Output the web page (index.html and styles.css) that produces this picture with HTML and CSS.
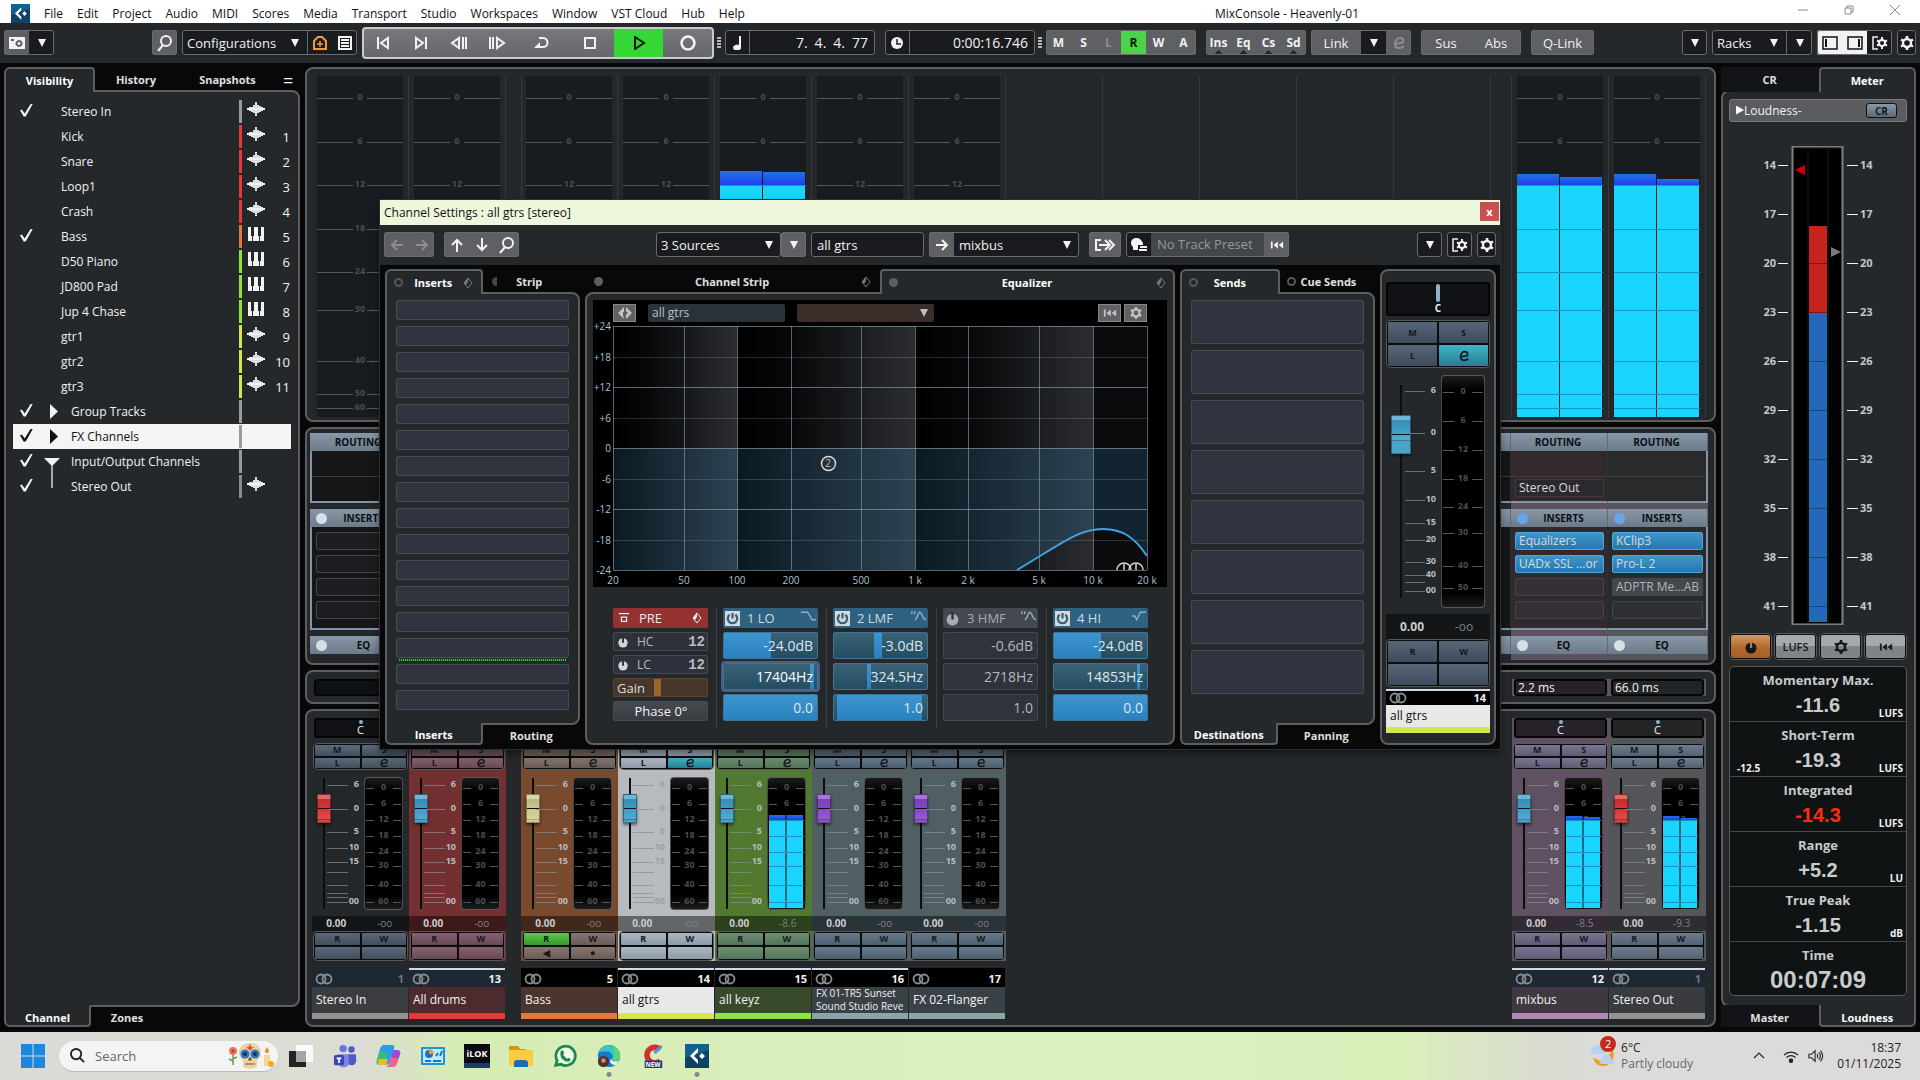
FILE: index.html
```html
<!DOCTYPE html>
<html lang="en">
<head>
  <meta charset="UTF-8" />
  <meta name="viewport" content="width=device-width, initial-scale=1.0"/>
  <title>MixConsole - Heavenly-01</title>
  <link rel="stylesheet" href="styles.css">
</head>
<body>
  <svg class="sprite" aria-hidden="true">
    <symbol id="i-down" viewBox="0 0 10 10"><path d="M1 1h8L5 9z" fill="currentColor"/></symbol>
    <symbol id="i-search" viewBox="0 0 18 18"><g fill="none" stroke="currentColor" stroke-width="2"><circle cx="10" cy="7" r="5"/><path d="M7 11l-5 6"/></g></symbol>
    <symbol id="i-camera" viewBox="0 0 18 14"><path fill="currentColor" fill-rule="evenodd" d="M1 1h16v12H1zM3 3v2h3V3zM11 4a3.500 3.500 0 1 0 .1 0zM11 6a1.500 1.500 0 1 1-.1 0z"/></symbol>
    <symbol id="i-home" viewBox="0 0 14 14"><path fill="none" stroke="currentColor" stroke-width="2" d="M1 13V5l4-4h4l4 4v8z"/><path stroke="currentColor" stroke-width="1.500" d="M4 8h6M7 5v6"/></symbol>
    <symbol id="i-list" viewBox="0 0 14 14"><path fill="none" stroke="currentColor" stroke-width="2" d="M1 1h12v12H1zM3 4h8M3 7h8M3 10h8"/></symbol>
    <symbol id="i-prev" viewBox="0 0 14 14"><path fill="none" stroke="currentColor" stroke-width="2" d="M2 1v12M12 2v10L5 7z"/></symbol>
    <symbol id="i-next" viewBox="0 0 14 14"><path fill="none" stroke="currentColor" stroke-width="2" d="M12 1v12M2 2v10l7-5z"/></symbol>
    <symbol id="i-rew" viewBox="0 0 18 14"><path fill="none" stroke="currentColor" stroke-width="2" d="M9 2v10L2 7zM13 1v12M16 1v12"/></symbol>
    <symbol id="i-fwd" viewBox="0 0 18 14"><path fill="none" stroke="currentColor" stroke-width="2" d="M9 2v10l7-5zM5 1v12M2 1v12"/></symbol>
    <symbol id="i-cycle" viewBox="0 0 16 14"><path fill="none" stroke="currentColor" stroke-width="2" d="M6 2h4a4 4 0 0 1 0 9H4"/><path fill="currentColor" d="M1 12l6-6v6z"/></symbol>
    <symbol id="i-stop" viewBox="0 0 14 14"><path fill="none" stroke="currentColor" stroke-width="2" d="M2 2h10v10H2z"/></symbol>
    <symbol id="i-play" viewBox="0 0 14 14"><path fill="none" stroke="currentColor" stroke-width="2" d="M3 1v12l9-6z"/></symbol>
    <symbol id="i-rec" viewBox="0 0 14 14"><circle cx="7" cy="7" r="5" fill="none" stroke="currentColor" stroke-width="2"/></symbol>
    <symbol id="i-note" viewBox="0 0 10 14"><path fill="currentColor" d="M7 0h2v11a4 3 0 1 1-2-2z"/></symbol>
    <symbol id="i-clock" viewBox="0 0 14 14"><circle cx="7" cy="7" r="6" fill="currentColor"/><path d="M7 3v5h4" fill="none" stroke="#1a1b1f" stroke-width="1.500"/></symbol>
    <symbol id="i-edit" viewBox="0 0 14 14"><path fill="none" stroke="currentColor" stroke-width="2" d="M3 8l8-1.500C12 3 10 2 8 2 5 2 3 5 3 8s1 4 4 4 4-1 5-2"/></symbol>
    <symbol id="i-gear" viewBox="0 0 14 14"><circle cx="7" cy="7" r="4" fill="none" stroke="currentColor" stroke-width="2.400"/><path stroke="currentColor" stroke-width="2.600" d="M7 0v3M7 11v3M1 3.500l2.500 1.500M10.500 9l2.500 1.500M1 10.500L3.500 9M10.500 5L13 3.500"/></symbol>
    <symbol id="i-setup" viewBox="0 0 16 14"><path fill="none" stroke="currentColor" stroke-width="1.500" d="M6 1H1v12h5"/><circle cx="10" cy="7" r="3" fill="none" stroke="currentColor" stroke-width="2"/><path stroke="currentColor" stroke-width="2" d="M10 1v3M10 10v3M5 4.500l2 1M13 8.500l2 1M5 9.500l2-1M13 5.500l2-1"/></symbol>
    <symbol id="i-zone-l" viewBox="0 0 16 14"><path fill="none" stroke="currentColor" stroke-width="1.500" d="M1 1h14v12H1z"/><path stroke="currentColor" stroke-width="2" d="M4 3v8"/></symbol>
    <symbol id="i-zone-r" viewBox="0 0 16 14"><path fill="none" stroke="currentColor" stroke-width="1.500" d="M1 1h14v12H1z"/><path stroke="currentColor" stroke-width="2" d="M12 3v8"/></symbol>
    <symbol id="i-left" viewBox="0 0 14 14"><path fill="none" stroke="currentColor" stroke-width="2" d="M13 7H2M7 2L2 7l5 5"/></symbol>
    <symbol id="i-right" viewBox="0 0 14 14"><path fill="none" stroke="currentColor" stroke-width="2" d="M1 7h11M7 2l5 5-5 5"/></symbol>
    <symbol id="i-up" viewBox="0 0 14 14"><path fill="none" stroke="currentColor" stroke-width="2" d="M7 14V2M2 7l5-5 5 5"/></symbol>
    <symbol id="i-dn" viewBox="0 0 14 14"><path fill="none" stroke="currentColor" stroke-width="2" d="M7 0v12M2 7l5 5 5-5"/></symbol>
    <symbol id="i-output" viewBox="0 0 22 14"><path fill="none" stroke="currentColor" stroke-width="2" d="M7 2H2v10h5M5 7h10M11 2l5 5-5 5M15 2l5 5-5 5"/></symbol>
    <symbol id="i-preset" viewBox="0 0 18 14"><path fill="currentColor" d="M7 0C3 0 1 2 1 5c0 2 1 3 2 4v3h5V7h5V5l-2-3C10 1 9 0 7 0zM10 8h7v2h-7zM9 11h8v2H9z"/></symbol>
    <symbol id="i-reset" viewBox="0 0 16 10"><path fill="currentColor" d="M1 1h2v8H1zM9 1v8L4 5zM15 1v8l-5-4z"/></symbol>
    <symbol id="i-diamond" viewBox="0 0 10 12"><path fill="none" stroke="currentColor" d="M5 1l4 5-4 5-4-5z"/><path fill="currentColor" d="M5 1v4L3 8 1 6z"/></symbol>
    <symbol id="i-compare" viewBox="0 0 14 12"><path fill="currentColor" d="M6 0v5H5v3l1 4L0 6zM8 0l6 6-6 6V8l2-2-2-2z"/></symbol>
    <symbol id="i-power" viewBox="0 0 14 14"><circle cx="7" cy="8" r="5.500" fill="currentColor"/><path d="M7 1v7" stroke="#2b2f38" stroke-width="2.200"/></symbol>
    <symbol id="i-measure" viewBox="0 0 14 14"><circle cx="7" cy="8" r="5.500" fill="currentColor"/><path d="M7 1v7" stroke="#b87a42" stroke-width="2.200"/></symbol>
    <symbol id="i-power-on" viewBox="0 0 16 16"><path fill="#d6d8da" d="M0 0h16v16H0z"/><path d="M5 4a5 5 0 1 0 6 0M8 2v6" fill="none" stroke="#2f6380" stroke-width="2.400"/></symbol>
    <symbol id="i-low" viewBox="0 0 16 10"><path fill="none" stroke="currentColor" stroke-width="1.500" d="M0 1h7l5 8h4"/></symbol>
    <symbol id="i-bell" viewBox="0 0 16 10"><path fill="none" stroke="currentColor" stroke-width="1.500" d="M1 0v3M4 0v3M4 9c3 0 3-8 5.500-8S12 9 16 9"/></symbol>
    <symbol id="i-high" viewBox="0 0 16 10"><path fill="none" stroke="currentColor" stroke-width="1.500" d="M1 5h3l2 4 4-8h6"/></symbol>
    <symbol id="i-wave" viewBox="0 0 18 14"><path stroke="currentColor" stroke-width="1.800" d="M0 7h18M3 5v4M5 5v5M7 3v8M9 0v14M11 3v8M13 4v6M15 5v4"/></symbol>
    <symbol id="i-keys" viewBox="0 0 16 14"><path fill="currentColor" d="M0 0h3v9h1v5H0zM6 0h4v9h1v5H5V9h1zM13 0h3v14h-4V9h1z"/></symbol>
    <symbol id="i-rings" viewBox="0 0 18 12"><g fill="none" stroke="currentColor" stroke-width="1.800"><circle cx="6" cy="6" r="4.500"/><circle cx="12" cy="6" r="4.500"/></g></symbol>
    <symbol id="i-cubase" viewBox="0 0 24 24"><path fill="#14608c" d="M0 0h24v24H0z"/><path fill="#0d4166" d="M0 14l24-8v18H0z"/><path fill="#fff" d="M13 4v4l-4 4 4 4v4l-8-8zM17 9l3 3-3 3-3-3z"/></symbol>
  </svg>

  <header class="menubar">
    <svg class="logo"><use href="#i-cubase"/></svg>
    <nav>
      <a href="#">File</a><a href="#">Edit</a><a href="#">Project</a><a href="#">Audio</a><a href="#">MIDI</a><a href="#">Scores</a><a href="#">Media</a><a href="#">Transport</a><a href="#">Studio</a><a href="#">Workspaces</a><a href="#">Window</a><a href="#">VST Cloud</a><a href="#">Hub</a><a href="#">Help</a>
    </nav>
    <h1>MixConsole - Heavenly-01</h1>
    <div class="window-controls">
      <button aria-label="Minimize"><svg viewBox="0 0 10 10"><path d="M0 5h10"/></svg></button>
      <button aria-label="Restore"><svg viewBox="0 0 10 10"><path d="M1 3h6v6H1zM3 3V1h6v6H7"/></svg></button>
      <button aria-label="Close"><svg viewBox="0 0 10 10"><path d="M0 0l10 10M10 0L0 10"/></svg></button>
    </div>
  </header>

  <div class="toolbar">
    <div class="group">
      <button class="lit" aria-label="Snapshot"><svg class="wide"><use href="#i-camera"/></svg></button>
      <button aria-label="Snapshots menu"><svg class="caret"><use href="#i-down"/></svg></button>
    </div>
    <div class="group find"><button class="lit" aria-label="Find"><svg class="big"><use href="#i-search"/></svg></button></div>
    <div class="group">
      <label class="combo combo-config"><select aria-label="Configurations"><option>Configurations</option></select><svg class="caret"><use href="#i-down"/></svg></label>
      <button class="orange" aria-label="Home"><svg><use href="#i-home"/></svg></button>
      <button aria-label="List"><svg><use href="#i-list"/></svg></button>
    </div>
    <div class="transport">
      <button aria-label="Previous"><svg><use href="#i-prev"/></svg></button>
      <button aria-label="Next"><svg><use href="#i-next"/></svg></button>
      <button aria-label="Rewind"><svg class="wide"><use href="#i-rew"/></svg></button>
      <button aria-label="Forward"><svg class="wide"><use href="#i-fwd"/></svg></button>
      <button class="w50" aria-label="Cycle"><svg class="wide"><use href="#i-cycle"/></svg></button>
      <button class="w50" aria-label="Stop"><svg><use href="#i-stop"/></svg></button>
      <button class="w50 play" aria-label="Play"><svg><use href="#i-play"/></svg></button>
      <button class="w50" aria-label="Record"><svg class="big"><use href="#i-rec"/></svg></button>
    </div>
    <i class="grip"></i>
    <div class="group time"><button aria-label="Bars and beats"><svg><use href="#i-note"/></svg></button><output>7.&ensp;4.&ensp;4.&ensp;77</output></div>
    <div class="group time second"><button aria-label="Seconds"><svg><use href="#i-clock"/></svg></button><output>0:00:16.746</output></div>
    <i class="grip"></i>
    <div class="group lit letters">
      <button>M</button><button>S</button><button class="off">L</button><button class="on">R</button><button>W</button><button>A</button>
    </div>
    <div class="group lit letters tight notched">
      <button>Ins</button><button>Eq</button><button>Cs</button><button>Sd</button>
    </div>
    <div class="group lit words link">
      <button>Link</button><button class="dark" aria-label="Link options"><svg class="caret"><use href="#i-down"/></svg></button><button class="off" aria-label="Edit link"><svg><use href="#i-edit"/></svg></button>
    </div>
    <div class="group lit words sus"><button>Sus</button><button>Abs</button></div>
    <div class="group lit words qlink"><button>Q-Link</button></div>
    <div class="group push"><button aria-label="Bypass"><svg class="caret"><use href="#i-down"/></svg></button></div>
    <div class="group">
      <label class="combo combo-racks"><select aria-label="Racks"><option>Racks</option></select><svg class="caret"><use href="#i-down"/></svg></label>
      <button aria-label="Rack menu"><svg class="caret"><use href="#i-down"/></svg></button>
    </div>
    <div class="group">
      <button class="white" aria-label="Left zone"><svg class="wide"><use href="#i-zone-l"/></svg></button>
      <button class="white" aria-label="Right zone"><svg class="wide"><use href="#i-zone-r"/></svg></button>
      <button aria-label="Window setup"><svg class="wide"><use href="#i-setup"/></svg></button>
    </div>
    <div class="group slim"><button aria-label="Settings"><svg><use href="#i-gear"/></svg></button></div>
  </div>

  <main>
    <aside class="panel left-zone">
      <div class="tabs">
        <button class="tab active">Visibility</button><button class="tab">History</button><button class="tab">Snapshots</button><span class="menu-mark">=</span>
      </div>
      <div class="pane"><ul id="trackList"></ul></div>
      <div class="tabs bottom"><button class="tab active">Channel</button><button class="tab">Zones</button></div>
    </aside>

    <div class="mixer">
      <section class="box bridge" id="bridge"></section>
      <section class="box racks" id="racks"></section>
      <section class="box latency" id="latency"></section>
      <section class="box strips" id="strips"></section>
    </div>

    <aside class="panel right-zone">
      <div class="tabs"><button class="tab">CR</button><button class="tab active">Meter</button></div>
      <div class="pane">
        <div class="loudness-head"><span><i class="tri"></i>Loudness-</span><button>CR</button></div>
        <div id="loudnessMeter"></div>
        <div class="loudness-buttons">
          <button class="amber" aria-label="Measure"><svg><use href="#i-measure"/></svg></button><button>LUFS</button><button aria-label="Loudness settings"><svg><use href="#i-gear"/></svg></button><button aria-label="Reset loudness"><svg><use href="#i-reset"/></svg></button>
        </div>
        <dl class="stats" id="stats"></dl>
      </div>
      <div class="tabs bottom"><button class="tab">Master</button><button class="tab active">Loudness</button></div>
    </aside>
  </main>

  <section class="dialog">
    <div class="dialog-title"><h2>Channel Settings : all gtrs [stereo]</h2><button aria-label="Close channel settings">x</button></div>
    <div class="toolbar dialog-tools">
      <div class="group lit dim"><button aria-label="Back"><svg><use href="#i-left"/></svg></button><button aria-label="Forward"><svg><use href="#i-right"/></svg></button></div>
      <div class="group lit"><button aria-label="Up"><svg><use href="#i-up"/></svg></button><button aria-label="Down"><svg><use href="#i-dn"/></svg></button><button aria-label="Search"><svg class="big"><use href="#i-search"/></svg></button></div>
      <div class="group sources"><label class="combo combo-config"><select aria-label="Sources"><option>3 Sources</option></select><svg class="caret"><use href="#i-down"/></svg></label></div>
      <div class="group lit"><button aria-label="Sources menu"><svg class="caret"><use href="#i-down"/></svg></button></div>
      <div class="group name"><input aria-label="Channel name" value="all gtrs"></div>
      <div class="group"><button class="lit" aria-label="Route"><svg><use href="#i-right"/></svg></button><label class="combo combo-config"><select aria-label="Output"><option>mixbus</option></select><svg class="caret"><use href="#i-down"/></svg></label></div>
      <div class="group lit out"><button aria-label="Output chain"><svg class="chain"><use href="#i-output"/></svg></button></div>
      <div class="group"><button aria-label="Presets"><svg class="wide"><use href="#i-preset"/></svg></button><span class="preset">No Track Preset</span><button class="lit" aria-label="Reset channel"><svg><use href="#i-reset"/></svg></button></div>
      <div class="group push"><button aria-label="Dialog menu"><svg class="caret"><use href="#i-down"/></svg></button></div>
      <div class="group"><button aria-label="Dialog setup"><svg class="wide"><use href="#i-setup"/></svg></button></div>
      <div class="group slim"><button aria-label="Dialog settings"><svg><use href="#i-gear"/></svg></button></div>
    </div>
    <div class="dialog-body">
      <div class="panel inserts">
        <div class="tabs"><button class="tab active"><i class="ring"></i>Inserts<svg class="dia"><use href="#i-diamond"/></svg></button><button class="tab"><i class="half"></i>Strip<i class="blank"></i></button></div>
        <div class="pane" id="insertSlots"></div>
        <div class="tabs bottom"><button class="tab active">Inserts</button><button class="tab">Routing</button></div>
      </div>
      <div class="panel equalizer">
        <div class="tabs"><button class="tab"><i class="dot"></i>Channel Strip<svg class="dia"><use href="#i-diamond"/></svg></button><button class="tab active"><i class="dot"></i>Equalizer<svg class="dia"><use href="#i-diamond"/></svg></button></div>
        <div class="pane">
          <div class="curve">
            <div class="curve-tools">
              <button aria-label="Compare"><svg><use href="#i-compare"/></svg></button>
              <input aria-label="EQ channel" value="all gtrs">
              <label class="combo"><select aria-label="EQ compare source"><option></option></select><svg class="caret"><use href="#i-down"/></svg></label>
              <button class="push" aria-label="Reset EQ"><svg><use href="#i-reset"/></svg></button>
              <button aria-label="EQ settings"><svg><use href="#i-gear"/></svg></button>
            </div>
            <div id="curve"></div>
          </div>
          <div class="bands" id="bands"></div>
        </div>
      </div>
      <div class="panel sends">
        <div class="tabs"><button class="tab active"><i class="ring"></i>Sends<i class="blank"></i></button><button class="tab"><i class="ring"></i>Cue Sends</button></div>
        <div class="pane" id="sendSlots"></div>
        <div class="tabs bottom"><button class="tab active">Destinations</button><button class="tab">Panning</button></div>
      </div>
      <div class="box dialog-strip" id="dialogStrip"></div>
    </div>
  </section>

  <footer class="taskbar">
    <button aria-label="Start"><svg viewBox="0 0 24 24"><path fill="#1b87dd" d="M0 0h11.500v11.500H0zM12.500 0H24v11.500H12.500zM0 12.500h11.500V24H0zM12.500 12.500H24V24H12.500z"/></svg></button>
    <label class="search">
      <svg class="glass" viewBox="0 0 16 16"><path fill="none" stroke="#222" stroke-width="2" d="M10.500 10.500L15 15M12 6.500a5.500 5.500 0 1 1-11 0 5.500 5.500 0 0 1 11 0z"/></svg>
      <input type="search" placeholder="Search" aria-label="Search">
      <svg class="skull" viewBox="0 0 46 26"><path stroke="#6a9a4a" stroke-width="1.500" d="M5 10v12M5 16l4-2M5 18l-4-2"/><circle cx="5" cy="8" r="4" fill="#e8745c"/><circle cx="5" cy="8" r="1.500" fill="#b43c32"/><path fill="#ecd3a2" d="M22 0c7 0 11 4 11 10 0 5-3 6-4 8v6c-3 2-11 2-14 0v-6c-1-2-4-3-4-8C11 4 15 0 22 0z"/><circle cx="17" cy="11" r="4.500" fill="#2877c8"/><circle cx="27" cy="11" r="4.500" fill="#2877c8"/><circle cx="17" cy="11" r="2" fill="#173250"/><circle cx="27" cy="11" r="2" fill="#173250"/><path fill="#e2503c" d="M22 1l1.500 3 3 .5-3 1.500L22 8l-1.500-2-3-1.500 3-.5z"/><path d="M22 14l-1.500 3h3zM17 21h10" stroke="#7c4c2e" fill="#7c4c2e"/><path fill="#f4d890" d="M36 12h6v11h-6z"/><path fill="#ec8b28" d="M39 4c3 4 2 6 0 6s-3-2 0-6z"/><circle cx="43" cy="21" r="3" fill="#f6a728"/></svg>
    </label>
    <button aria-label="Task view"><svg viewBox="0 0 26 24"><path fill="#fafafa" d="M8 1h17v17H8z"/><path fill="#232323" d="M1 7h17v16H1z"/><path fill="#a5a5a5" d="M8 7h10v11H8z"/></svg></button>
    <button aria-label="Teams"><svg viewBox="0 0 26 26"><circle cx="11" cy="5" r="4" fill="#6b74e8"/><circle cx="20" cy="6" r="3.500" fill="#5059c9"/><path fill="#7b83eb" d="M5 11h13v8a6.500 6.500 0 0 1-13 0z"/><path fill="#5059c9" d="M17 11h8v8a5 5 0 0 1-8 3z"/><rect x="1" y="12" width="11" height="11" rx="2" fill="#3d45b0"/><path stroke="#fff" stroke-width="1.800" d="M4 15.500h5M6.500 15.500v5"/></svg></button>
    <button aria-label="Copilot"><svg viewBox="0 0 26 24"><path fill="#2d9cf0" d="M8 1h8c2 0 3 2 2 4l-4 12c-1 3-3 4-5 4H4c-3 0-4-2-3-5L4 5c1-3 2-4 4-4z"/><path fill="#36c06e" d="M1 16l3-9 8 3-3 10H4c-3 0-4-1-3-4z"/><path fill="#f0b72e" d="M3 15h9l-2 6H4c-2 0-3-2-1-6z"/><path fill="#a24bd8" d="M17 6h4c3 0 4 2 3 5l-3 8c-1 3-3 4-5 4h-3z"/><path fill="#f0668a" d="M14 14h8l-1 5c-1 3-3 4-5 4H9c2 0 3-1 4-4z"/></svg></button>
    <button aria-label="Control panel"><svg viewBox="0 0 26 24"><rect x="1" y="3" width="24" height="18" rx="1" fill="#1d94d8"/><path fill="#bfeaff" d="M3 5h20v14H3z"/><circle cx="9" cy="10" r="4" fill="#1774c0"/><path fill="#f0982c" d="M9 10V5a5 5 0 0 1 5 5z"/><path stroke="#1774c0" stroke-width="2" d="M16 12l2-3M20 12l2-5M5 17h6M13 17h8"/></svg></button>
    <button class="ilok" aria-label="iLok"><span>iLOK</span></button>
    <button aria-label="Explorer"><svg viewBox="0 0 26 24"><path fill="#d89410" d="M1 2h9l2 3h6v5H1z"/><path fill="#fccb41" d="M1 6h24v16H1z"/><path fill="#1b6db3" d="M6 23v-5a3 3 0 0 1 3-2h8a3 3 0 0 1 3 2v5z"/></svg></button>
    <button aria-label="WhatsApp"><svg viewBox="0 0 26 26"><path fill="#f2fbe8" stroke="#1c8a4c" stroke-width="3" d="M3 23l1.500-5A10.500 10.500 0 1 1 8.500 22z"/><path fill="#1c8a4c" d="M9 7l2 0 1 3-1 2 4 4 2-1 2 1.500c0 2-2 3-4 2.500-4-1-7-4-7-8 0-2 0-3 1-4z"/></svg></button>
    <button class="running" aria-label="Edge"><svg viewBox="0 0 26 26"><circle cx="13" cy="13" r="12" fill="#1878c8"/><path fill="#37c8c4" d="M2 9C5 1 15-1 21 4c4 3 5 9 3 12-2 2-7 3-8 0 2-3 0-8-5-8-4 0-7 0-9 1z"/><path fill="#5fd86e" d="M18 2c6 3 8 9 6 14-1 2-5 3-7 1 3-4 3-10 1-15z"/><path fill="#eef6dd" d="M15 16c2 4 7 3 9 1-1 3-3 5-5 6-4-1-6-4-4-7z"/><circle cx="7" cy="19" r="6" fill="#4a302c"/><circle cx="7" cy="18" r="2.500" fill="#c98d72"/></svg></button>
    <button aria-label="CCleaner"><svg viewBox="0 0 26 26"><path fill="none" stroke="#d92c2c" stroke-width="6" d="M21 6a8.500 8.500 0 1 0 0 12"/><path fill="#4d9be0" d="M13 8l9-7 1 2-7 8z"/><rect x="4" y="18" width="19" height="8" fill="#1c3b78"/><text x="13" y="25" fill="#fff" font-size="7" font-weight="700" text-anchor="middle">NEW</text></svg></button>
    <button class="running" aria-label="Cubase"><svg><use href="#i-cubase"/></svg></button>
    <div class="weather">
      <div class="weather-icon"><svg viewBox="0 0 26 26"><path fill="#f09a28" d="M4 15c4 4 9 4 14 0 4-4 5-6 5-9 4 8 1 18-9 18-6 0-9-4-10-9z"/><path fill="#b8d2f4" d="M3 12a4 4 0 0 1 2-7 5 5 0 0 1 9 1 3 3 0 0 1 0 6zM13 22a3 3 0 0 1 1-6 4 4 0 0 1 8 1 2.500 2.500 0 0 1 1 5z"/></svg><b>2</b></div>
      <p>6°C<br><span>Partly cloudy</span></p>
    </div>
    <div class="tray">
      <svg viewBox="0 0 16 16"><path d="M3 10l5-5 5 5"/></svg>
      <svg viewBox="0 0 16 16"><path d="M1 7a10 10 0 0 1 14 0M3.500 9.500a6.500 6.500 0 0 1 9 0M6 12a3 3 0 0 1 4 0"/><circle cx="8" cy="13" r="1.500" fill="#222"/></svg>
      <svg viewBox="0 0 18 16"><path d="M1 6h3l4-4v12l-4-4H1zM10 6q2 2 0 4M12 4q4 4 0 8M14 2q5 6 0 12"/></svg>
    </div>
    <time>18:37<br>01/11/2025</time>
  </footer>

  <script src="script.js"></script>
</body>
</html>
```
FILE: styles.css
```css
* {
  box-sizing: border-box;
}

body {
  --edge: #5d5e61;
  --face: #24282b;
  display: flex;
  flex-direction: column;
  height: 100vh;
  margin: 0;
  overflow: hidden;
  background: #080808;
  color: #f2f2f2;
  font: 12px/16px "Open Sans", "Noto Sans", sans-serif;
}

button, input, select {
  margin: 0;
  padding: 0;
  border: 0;
  border-radius: 0;
  background: none;
  color: inherit;
  font: inherit;
  outline: none;
}

h1, h2, p, ul, dl, dd {
  margin: 0;
  padding: 0;
}

svg {
  display: block;
  flex: none;
}

.sprite {
  position: absolute;
  width: 0;
  height: 0;
}

/* menu bar */
.menubar {
  display: grid;
  grid-template-columns: 33px 1171px 1fr auto;
  align-items: center;
  height: 23px;
  padding: 4px 20px 0 11px;
  background: #fff;
  color: #111;
}

.menubar .logo {
  width: 19px;
  height: 19px;
}

.menubar nav {
  display: flex;
  gap: 14px;
}

.menubar a {
  color: inherit;
  text-decoration: none;
}

.menubar nav, .menubar h1 {
  font-size: 12px;
  font-weight: 400;
}

.window-controls {
  display: flex;
  gap: 36px;
  padding-bottom: 8px;
}

.window-controls svg {
  width: 10px;
  height: 10px;
  fill: none;
  stroke: #888;
}

/* toolbars */
.toolbar {
  display: flex;
  align-items: center;
  gap: 5px;
  height: 40px;
  padding: 0 4px 1px;
  background: var(--face);
}

.group {
  display: flex;
  height: 25px;
  overflow: hidden;
  outline: 1px solid #6a6b6e;
  outline-offset: -1px;
  border-radius: 3px;
  background: #1a1b1f;
}

.group button {
  display: flex;
  flex: 0 0 25px;
  align-items: center;
  justify-content: center;
}

.group.time button {
  border-right: 1px solid #6a6b6e;
}

.toolbar svg {
  width: 14px;
  height: 14px;
}

.toolbar svg.caret {
  width: 10px;
  height: 10px;
}

.toolbar svg.wide {
  width: 18px;
}

.toolbar svg.chain {
  width: 22px;
}

.toolbar svg.big {
  width: 18px;
  height: 18px;
}

.group.lit, .lit {
  background: #5f6063;
}

.group .white {
  background: #f2f2f2;
  color: #111;
}

.group .dark {
  background: #1a1b1f;
}

.group .orange {
  border-left: 1px solid #6a6b6e;
  color: #f09a3c;
}

.dim, .group .off {
  color: #8c8d90;
}

.group .on {
  background: #4bd44b;
  color: #0c1c0c;
}

.find {
  margin-left: 93px;
}

.combo {
  display: flex;
  align-items: center;
  padding: 0 7px 0 5px;
}

.combo select {
  flex: 1;
  min-width: 0;
  appearance: none;
  font-size: 13px;
}

.combo-config {
  width: 125px;
}

.combo-racks {
  width: 75px;
  border-right: 1px solid #6a6b6e;
}

.transport {
  display: flex;
  height: 32px;
  border: 2px solid #c9cacd;
  border-radius: 4px;
  background: linear-gradient(#77787b, #66676a);
}

.transport button {
  display: flex;
  flex: 0 0 38px;
  align-items: center;
  justify-content: center;
}

.transport .w50 {
  flex-basis: 49px;
}

.transport .play {
  background: #36d636;
  color: #0c1c0c;
}

.grip {
  width: 4px;
  height: 12px;
  margin: 0 -1px 0 -2px;
  background: repeating-linear-gradient(#b8b8b8 0 2px, transparent 2px 3px);
}

.time {
  width: 150px;
}

.time.second {
  margin-left: 5px;
}

.time output {
  flex: 1;
  padding-right: 7px;
  font-size: 14px;
  line-height: 25px;
  text-align: right;
}

.letters {
  font-size: 12px;
  font-weight: 700;
}

.letters.tight {
  margin-left: 5px;
}

.notched button {
  background: conic-gradient(from 135deg at 50% 20px, #24282b 90deg, transparent 0);
}

.words {
  font-size: 13px;
}

.link button:first-child, .sus button {
  flex-basis: 50px;
}

.sus, .qlink {
  margin-left: 5px;
}

.qlink button {
  flex-basis: 63px;
}

.toolbar .push {
  margin-left: auto;
}

.slim button {
  flex-basis: 19px;
}

/* tabbed panels */
.panel {
  display: flex;
  flex-direction: column;
}

.tabs {
  display: flex;
  flex: none;
  position: relative;
  height: 25px;
  margin-bottom: -2px;
}

.tabs.bottom {
  height: 22px;
  margin: -2px 0 0;
}

.tab {
  flex: 1;
  border: 2px solid transparent;
  font-weight: 700;
  font-size: 11px;
  color: #e0e0e0;
}

.tab.active {
  border-color: var(--edge);
  border-bottom: 0;
  border-radius: 6px 4px 0 0;
  background: var(--face);
  color: #fff;
}

.bottom .tab {
  padding-top: 3px;
}

.bottom .tab.active {
  padding-top: 5px;
  border: 2px solid var(--edge);
  border-top: 0;
  border-radius: 0 0 4px 6px;
}

.pane {
  flex: 1;
  min-height: 0;
  border: 2px solid var(--edge);
  border-radius: 0 8px 8px 0;
  background: var(--face);
}

.box {
  border: 2px solid var(--edge);
  border-radius: 8px;
  background: var(--face);
}

main {
  display: flex;
  flex: 1;
  gap: 5px;
  min-height: 0;
  padding: 4px 4px 5px;
}

/* visibility list */
.left-zone {
  flex: 0 0 296px;
}

.left-zone .tab {
  flex: 0 0 91px;
}

.left-zone .tab + .tab {
  flex-basis: 82px;
}

.left-zone .tab + .tab + .tab {
  flex-basis: 101px;
}

.left-zone .bottom .tab {
  flex-basis: 87px;
}

.left-zone .bottom .tab + .tab {
  flex-basis: 72px;
}

.menu-mark {
  margin-left: 5px;
  font-size: 18px;
  line-height: 26px;
}

.left-zone .pane {
  padding: 7px 7px 6px;
}

.left-zone ul {
  list-style: none;
}

.left-zone li {
  display: grid;
  grid-template: 25px / 32px 16px 178px 3px 24px 1fr;
  align-items: center;
  height: 25px;
  font-size: 12px;
}

.left-zone li input {
  width: 13px;
  height: 13px;
  margin: 0 0 3px 7px;
  appearance: none;
}

.left-zone li input:checked {
  background: currentColor;
  clip-path: polygon(0 52%, 14% 46%, 36% 76%, 84% 0, 100% 0, 44% 100%, 28% 100%);
}

.left-zone li label {
  display: contents;
}

.left-zone li.folder label span {
  padding-left: 10px;
}

.left-zone li.selected {
  background: #f4f4f4;
  color: #111;
}

.left-zone li .bar {
  height: 23px;
  background: var(--color);
}

.left-zone li svg {
  width: 18px;
  height: 14px;
  margin: 0 0 6px 5px;
}

.left-zone li b {
  padding-right: 1px;
  font-size: 13px;
  font-weight: 400;
  text-align: right;
}

.fold {
  width: 8px;
  height: 15px;
  margin-left: 5px;
  background: currentColor;
  clip-path: polygon(0 0, 100% 50%, 0 100%);
}

.fold.open {
  align-self: start;
  width: 16px;
  height: 39px;
  margin-left: -1px;
  clip-path: polygon(0 23%, 100% 23%, 54% 42%, 54% 100%, 46% 100%, 46% 42%);
}

/* mixer */
.mixer {
  display: flex;
  flex: 1;
  flex-direction: column;
  gap: 5px;
  min-width: 0;
}

.mixer > .box {
  display: flex;
  padding: 7px 8px 6px 5px;
}

.cell {
  flex: 0 0 97px;
}

.cell.gap-after {
  margin-right: 15px;
}

.filler {
  flex: 1;
}

.mixer > .bridge {
  flex: 1;
  padding-bottom: 2px;
}

.bridge .cell {
  display: flex;
  justify-content: center;
  border-right: 1px solid #36393c;
}

.well {
  height: 341px;
  background: #181b1f;
}

.bridge .cell.gap-after {
  box-shadow: 15px 0 0 0 #24282b, 16px 0 0 #36393c;
}

.bridge .filler {
  background: repeating-linear-gradient(90deg, transparent 0 96px, #36393c 96px 97px);
  border-right: 1px solid #36393c;
}

.scale text {
  fill: #4b4e53;
  font-size: 9px;
  font-weight: 700;
  text-anchor: middle;
}

.scale .tick {
  stroke: #54585c;
}

.rack {
  display: flex;
  flex-direction: column;
  padding-bottom: 6px;
  background: var(--gap, #24282b);
}

.mixer > .racks {
  padding: 4px 6px 3px 3px;
}

.racks .rack:first-child, .racks .rack:last-child {
  flex-basis: 99px;
}

.rack h3 {
  display: flex;
  align-items: center;
  height: 18px;
  margin: 0;
  padding: 0 8px 0 6px;
  border-right: 1px solid #5f6c79;
  background: linear-gradient(#8797a7, #6c7b8a);
  color: #0b0d10;
  font-size: 10px;
  font-weight: 700;
}

.rack h3 span {
  flex: 1;
  text-align: center;
}

.rack h3 i {
  width: 11px;
  height: 11px;
  border-radius: 50%;
  background: var(--led, #d5dfe8);
}

.racks .routing, .racks .slots {
  margin-bottom: 6px;
  padding: 2px 3px 2px 4px;
  border-right: 1px solid #2c2f32;
  border-bottom: 2px solid #8494a5;
  background: var(--rack, #151618);
}

.racks .routing {
  display: flex;
  flex-direction: column;
  justify-content: flex-end;
  height: 52px;
  padding-bottom: 4px;
  background: linear-gradient(#3a3c3f, #3a3c3f) 0 25px / 100% 1px no-repeat var(--rack, #151618);
}

.racks .slots {
  height: 103px;
  padding-top: 5px;
}

.racks .rack:first-child .routing, .racks .rack:first-child .slots {
  border-left: 2px solid #8494a5;
}

.racks .rack:last-child .routing, .racks .rack:last-child .slots {
  border-right: 2px solid #8494a5;
}

.slot {
  height: 18px;
  margin-bottom: 5px;
  padding: 0 3px;
  border: 1px solid #43464e;
  border-radius: 2px;
  font-size: 12px;
  line-height: 16px;
  white-space: nowrap;
  color: #d8dadc;
}

.slots .slot {
  background: #ffffff08;
}

.slots .slot.used {
  border-color: #4fa6d8;
  background: linear-gradient(#3f95c8, #2478b0);
}

.slots .slot.bypassed {
  background: #42474d;
  color: #b2b4b7;
}

.routing .slot {
  margin: 0;
  border-color: #3d3a40;
  background: #2b292d;
}

.latency {
  height: 34px;
}

.latency .cell {
  padding: 0 2px;
  background: var(--gap, transparent);
}

.latency span {
  display: block;
  height: 17px;
  padding-left: 2px;
  border: 2px solid #050505;
  border-radius: 3px;
  background: var(--dark, #141518);
  line-height: 14px;
}

/* channel strips */
.strip {
  display: flex;
  flex-direction: column;
}

.strip-body {
  margin-bottom: 7px;
  background: var(--tint);
}

.pan {
  display: flex;
  flex-direction: column;
  align-items: center;
  justify-content: flex-end;
  height: 20px;
  margin: 0 2px 5px;
  border: 2px solid #050505;
  border-radius: 3px;
  background: var(--dark);
  font-size: 11px;
  line-height: 12px;
}

.pan i {
  width: 4px;
  height: 4px;
  border-radius: 2px;
  background: #8ab4cc;
}

.keys {
  display: grid;
  grid-template: 1fr 1fr / 1fr 1fr;
  gap: 2px;
  height: 27px;
  margin: 0 1px;
  padding: 1px;
  border: 1px solid #ffffff50;
  border-radius: 5px;
  background: #0b0c0e;
}

.keys button {
  display: flex;
  align-items: center;
  justify-content: center;
  min-height: 0;
  border-radius: 1px;
  background: linear-gradient(#ffffff18, #00000020), var(--key);
  color: #14181c;
  font-size: 9px;
  font-weight: 700;
  line-height: 10px;
}

.keys svg {
  width: 10px;
  height: 10px;
}

.keys .cyan {
  background: linear-gradient(#43b3c6, #237f93);
}

.keys .green {
  background: linear-gradient(#62c94e, #2f9a2c);
}

.faders {
  display: flex;
  height: 133px;
  margin: 7px 0 6px;
  padding-left: 5px;
}

.faders input {
  width: 14px;
  height: 131px;
  margin-top: 1px;
  appearance: none;
  writing-mode: vertical-lr;
  direction: rtl;
  background: linear-gradient(#0c0d0f, #0c0d0f) center / 2px 100% no-repeat;
}

.faders input::-webkit-slider-thumb {
  width: 14px;
  height: 29px;
  appearance: none;
  border: 1px solid #00000060;
  border-radius: 1px;
  background:
    linear-gradient(#101010, #101010) center / 100% 1px no-repeat,
    linear-gradient(#ffffff40 0 4px, #00000018 4px 5px, transparent 14px, #ffffff20 24px, #00000030 24px 25px, #ffffff10 25px),
    var(--cap);
  box-shadow: 0 2px 3px #00000080;
}

.ruler {
  margin-left: -4px;
  overflow: visible;
}

.ruler text {
  fill: var(--ink, #b9bdc2);
  font-size: 9px;
  font-weight: 700;
  text-anchor: end;
}

.ruler path {
  stroke: var(--line, #8a8e92);
  opacity: 0.7;
}

.led {
  height: 133px;
  margin-left: 5px;
  padding: 1px;
  border: 1px solid #ffffff45;
  border-radius: 4px;
  background: linear-gradient(#1c1c1c, #000 14px, #000 calc(100% - 14px), #1c1c1c);
}

.values {
  display: grid;
  grid-template-columns: 1fr 1fr;
  height: 15px;
  background: #00000075;
  color: #c9ccd0;
  font-size: 10px;
  font-weight: 700;
  line-height: 15px;
  text-align: center;
}

.values span {
  color: #7d8084;
  font-weight: 400;
}

.values + .keys {
  height: 30px;
}

.plate {
  height: 51px;
  margin-right: 1px;
  border-top: 2px solid var(--top);
  border-bottom: 6px solid var(--color);
  background: var(--name);
}

.plate-top {
  display: flex;
  align-items: center;
  justify-content: space-between;
  height: 17px;
  padding: 0 4px 0 3px;
  background: var(--num);
  font-size: 11px;
  font-weight: 700;
}

.plate svg {
  width: 18px;
  height: 12px;
  color: #8b8e92;
}

.plate p {
  display: flex;
  align-items: center;
  height: 26px;
  padding: 0 0 0 4px;
  color: var(--label, #f2f2f2);
  white-space: nowrap;
}

.plate p.small {
  font-size: 10px;
  line-height: 13px;
}

.muted {
  color: #75787c;
}

/* right zone */
.right-zone {
  flex: 0 0 195px;
}

.right-zone .tabs {
  background: #131418;
}

.right-zone .pane {
  padding: 7px 7px 0 6px;
  border-radius: 8px 0 0 8px;
}

.right-zone .tab.active {
  border-radius: 4px 6px 0 0;
}

.right-zone .bottom .tab.active {
  border-radius: 0 0 6px 4px;
}

.loudness-head {
  display: flex;
  align-items: center;
  justify-content: space-between;
  height: 23px;
  margin-bottom: 24px;
  padding: 0 9px 0 6px;
  border: 1px solid #77797c;
  border-radius: 3px;
  background: #5b5c60;
}

.loudness-head button {
  width: 31px;
  height: 15px;
  border: 1px solid #111;
  border-radius: 3px;
  background: linear-gradient(#8798a8, #5b6a78);
  color: #16191c;
  font-size: 10px;
  font-weight: 700;
  line-height: 12px;
}

.tri {
  display: inline-block;
  width: 8px;
  height: 9px;
  background: #fff;
  clip-path: polygon(0 0, 100% 50%, 0 100%);
}

#loudnessMeter text {
  fill: #c4c6c8;
  font-size: 11px;
  font-weight: 700;
}

.loudness-buttons {
  display: flex;
  gap: 2px;
  margin: 8px 0 6px;
}

.loudness-buttons button {
  display: flex;
  flex: 1;
  align-items: center;
  justify-content: center;
  height: 27px;
  border: 2px solid #0d0e10;
  outline: 1px solid #55575a;
  outline-offset: -1px;
  border-radius: 4px;
  background: linear-gradient(#a6a8a9 50%, #808486 50%);
  color: #15171a;
  font-weight: 600;
  font-size: 11px;
}

.loudness-buttons .amber {
  background: linear-gradient(#cf9a62, #b26a2c 55%, #a5601f);
}

.loudness-buttons svg {
  width: 14px;
  height: 14px;
}

.stats {
  border: 1px solid #55575a;
  border-radius: 5px;
  background: #101314;
  color: #c9cbcd;
  font-weight: 700;
}

.stats div {
  display: grid;
  grid-template-columns: 1fr auto 1fr;
  grid-template-rows: 26px 29px;
  height: 55px;
  padding: 0 3px;
  border-bottom: 1px solid #45484b;
}

.stats div:last-child {
  height: 53px;
  border: 0;
}

.stats dt {
  grid-column: 1 / 4;
  font-size: 13px;
  line-height: 26px;
  text-align: center;
}

.stats dd {
  font: 700 20px/24px "Liberation Sans", sans-serif;
}

.stats div:last-child dd {
  font-size: 24px;
}

.stats small {
  align-self: end;
  color: #f2f2f2;
  font-size: 10px;
  line-height: 18px;
}

.stats small:first-of-type {
  padding-left: 4px;
}

.stats small:last-child {
  text-align: right;
}

.stats .over {
  color: #ff2a10;
}

/* channel settings window */
.dialog {
  position: absolute;
  top: 200px;
  left: 380px;
  display: flex;
  flex-direction: column;
  width: 1120px;
  background: #080808;
  box-shadow: 0 0 0 1px #2c2f32, 0 4px 8px #00000080;
}

.dialog-title {
  display: flex;
  align-items: center;
  justify-content: space-between;
  height: 25px;
  padding: 0 1px 0 4px;
  background: #eef7dc;
  color: #111;
}

.dialog-title h2 {
  font-size: 12px;
  font-weight: 400;
}

.dialog-title button {
  width: 19px;
  height: 19px;
  margin-bottom: 2px;
  background: #c75050;
  color: #fff;
  font-weight: 700;
  font-size: 11px;
  line-height: 16px;
}

.dialog-tools .dim {
  margin-right: 5px;
}

.dialog-tools .name {
  width: 113px;
}

.dialog-tools .name input {
  width: 100%;
  padding-left: 6px;
  font-size: 13px;
}

.sources {
  margin: 0 -5px 0 132px;
}

.out {
  margin-left: 5px;
}

.out button {
  flex-basis: 32px;
}

.preset {
  width: 113px;
  padding-left: 6px;
  background: #43464a;
  color: #96989b;
  font-size: 13px;
  line-height: 24px;
}

.dialog-body {
  display: flex;
  gap: 5px;
  height: 484px;
  padding: 4px 4px 4px 5px;
}

.dialog .inserts, .dialog .sends {
  flex: 0 0 195px;
}

.dialog .equalizer {
  flex: 1;
  min-width: 0;
}

.dialog .tab {
  display: flex;
  align-items: center;
  justify-content: space-between;
  padding: 0 7px;
}

.dialog .bottom .tab {
  justify-content: center;
  padding-top: 3px;
}

.dialog .sends .tabs:first-child .tab + .tab {
  justify-content: flex-start;
  gap: 5px;
  padding: 0 5px;
}

.ring, .dot {
  width: 9px;
  height: 9px;
  border: 2px solid #55585b;
  border-radius: 50%;
}

.dot {
  border: 0;
  background: #5c5f65;
}

.half {
  width: 5px;
  height: 9px;
  border-radius: 5px 0 0 5px;
  background: #44464a;
}

.blank {
  width: 9px;
}

.dia {
  width: 10px;
  height: 12px;
  color: #77797d;
}

.inserts .pane, .sends .pane {
  display: flex;
  flex-direction: column;
  gap: 6px;
  padding: 6px 9px;
}

.bay {
  flex: none;
  height: 20px;
  border: 1px solid #454c58;
  border-radius: 2px;
  background: #31343e;
}

.sends .bay {
  height: 44px;
}

.bay.post {
  position: relative;
}

.bay.post::after {
  content: "";
  position: absolute;
  inset: auto 2px -4px;
  height: 2px;
  background: repeating-linear-gradient(90deg, #21d321 0 1px, #0a4a0a 1px 2px);
}

.equalizer .pane {
  padding: 6px;
  border-radius: 8px 0 8px 8px;
}

.equalizer .tab.active {
  border-radius: 4px 6px 0 0;
}

.curve {
  height: 287px;
  padding-top: 4px;
  background: #000;
}

.curve-tools {
  display: flex;
  gap: 12px;
  height: 18px;
  padding: 0 20px;
}

.curve-tools button {
  display: flex;
  align-items: center;
  justify-content: center;
  width: 23px;
  border: 1px solid #85878a;
  background: #606164;
  color: #c4c4c4;
}

.curve-tools svg {
  width: 14px;
  height: 12px;
}

.curve-tools svg.caret {
  width: 12px;
  height: 10px;
}

.curve-tools .push {
  margin: 0 -9px 0 auto;
}

.curve-tools input, .curve-tools .combo {
  width: 137px;
  padding: 0 4px;
  border-radius: 2px;
  background: #2b3238;
  color: #b9c0c6;
}

.curve-tools .combo {
  background: #392e2a;
}

#curve svg {
  overflow: visible;
}

#curve text {
  fill: #a9c4d4;
  font-size: 10px;
}

.bands {
  display: grid;
  grid-template-columns: repeat(5, 95px);
  gap: 15px;
  padding: 21px 0 0 20px;
}

.band {
  display: grid;
  grid-template-rows: 20px 27px 27px 27px;
  row-gap: 4px;
  height: 120px;
  box-shadow: 8px 0 0 #24282b, 9px 0 0 #3b3f43;
}

.band:last-child {
  box-shadow: none;
}

.band.pre {
  grid-template-rows: 20px 19px 19px 19px 20px;
}

.band header {
  display: flex;
  align-items: center;
  gap: 7px;
  padding: 0 2px;
  border-radius: 2px;
  background: #2f6280;
  color: #cfdbe3;
  font-size: 13px;
}

.band header span {
  flex: 1;
}

.band header svg {
  width: 15px;
  height: 15px;
}

.band header svg.shape {
  height: 10px;
  margin-bottom: 4px;
  color: #8fb0c2;
}

.band.off header {
  background: #43494f;
  color: #a9adb1;
}

.band.pre header {
  gap: 9px;
  padding: 0 5px;
  background: #943131;
  color: #ececec;
}

.band.pre header svg {
  width: 12px;
  height: 12px;
}

.band input {
  width: 100%;
  padding-right: 4px;
  border: 1px solid #3f7594;
  border-radius: 2px;
  background:
    linear-gradient(#ffffff18, #00000010),
    linear-gradient(90deg, transparent var(--from), #2b8acb var(--from) var(--to), transparent var(--to)), #265269;
  color: #dfe6ea;
  font-size: 14px;
  text-align: right;
}

.band input.focus {
  outline: 2px solid #4a6080;
  color: #fff;
}

.band.off input {
  border-color: #454951;
  background: #30333c;
  color: #b5b7bb;
}

.pre .filter, .pre .gain, .pre .phase {
  display: flex;
  align-items: center;
  gap: 8px;
  padding: 0 2px 0 3px;
  border: 1px solid #454c55;
  border-radius: 2px;
  background: #2e313b;
  color: #b8babd;
}

.pre .filter svg {
  width: 12px;
  height: 12px;
  color: #d4d4d4;
}

.pre .filter b {
  margin-left: auto;
  font: 700 14px/14px "Liberation Mono", monospace;
}

.pre .gain {
  border-color: #594430;
  background: linear-gradient(90deg, transparent 43%, #9a6430 43% 51%, transparent 51%), #46372a;
  color: #dcdcdc;
  font-size: 13px;
}

.pre .phase {
  justify-content: center;
  background: linear-gradient(#464a50, #383b40);
  color: #f2f2f2;
  font-size: 13px;
}

.dialog-strip {
  flex: 0 0 116px;
  padding: 11px 4px 9px;
}

.dialog-strip .strip-body {
  margin-bottom: 2px;
}

.dialog-strip .pan {
  height: 34px;
  margin: 0 0 4px;
  font-weight: 700;
  font-size: 10px;
}

.dialog-strip .pan i {
  width: 4px;
  height: 18px;
}

.dialog-strip .keys, .dialog-strip .values + .keys {
  height: 48px;
  margin: 0;
}

.dialog-strip .keys svg {
  width: 12px;
  height: 12px;
}

.dialog-strip .faders {
  height: 233px;
}

.dialog-strip .faders input {
  width: 20px;
  height: 213px;
  margin-top: 10px;
}

.dialog-strip .faders input::-webkit-slider-thumb {
  width: 20px;
  height: 39px;
}

.dialog-strip .ruler {
  margin-left: -6px;
}

.dialog-strip .led {
  height: 233px;
}

.dialog-strip .values {
  height: 25px;
  font-size: 12px;
  line-height: 25px;
}

.dialog-strip .plate {
  height: 44px;
  margin: 0;
}

.dialog-strip .plate-top {
  height: 14px;
}

.dialog-strip .plate p {
  height: 22px;
}

/* taskbar */
.taskbar {
  position: relative;
  display: flex;
  flex: 0 0 48px;
  align-items: center;
  gap: 18px;
  padding: 0 19px 0 20px;
  background: linear-gradient(90deg, #dbdad7 0, #dbdcd3 360px, #d6ecb4 460px, #dcefbf 50%, #dbefbb 1400px, #d9dcd0 1540px, #dcdbd9 1600px);
  color: #222;
}

.taskbar button {
  flex: 0 0 26px;
}

.taskbar button svg {
  width: 26px;
  height: 24px;
}

.taskbar button:first-child {
  flex-basis: 24px;
  margin-right: -5px;
}

.search {
  display: flex;
  align-items: center;
  gap: 10px;
  width: 219px;
  height: 31px;
  margin-right: -8px;
  padding: 0 4px 0 11px;
  border-bottom: 1px solid #bbb;
  border-radius: 16px;
  background: #f5f4f4;
}

.search .glass {
  width: 15px;
  height: 15px;
}

.search input {
  flex: 1;
  min-width: 0;
  font-size: 13px;
}

.search input::placeholder {
  color: #666;
}

.search .skull {
  width: 46px;
  height: 26px;
}

.ilok span {
  display: block;
  height: 24px;
  border-bottom: 5px solid #1c3c6c;
  background: #0b0c10;
  color: #fff;
  font-size: 9px;
  font-weight: 700;
  line-height: 20px;
}

.taskbar .running {
  height: 42px;
  background: radial-gradient(circle, #888 2px, transparent 3px) center bottom / 8px 5px no-repeat;
}

.weather {
  display: flex;
  gap: 6px;
  margin-left: auto;
}

.weather p {
  color: #222;
}

.weather span {
  color: #666;
}

.weather-icon {
  position: relative;
  padding-top: 2px;
}

.weather-icon svg {
  width: 26px;
  height: 26px;
}

.weather-icon b {
  position: absolute;
  top: -4px;
  right: -1px;
  width: 16px;
  border-radius: 8px;
  background: #c42b1c;
  color: #fff;
  font-size: 11px;
  font-weight: 400;
  text-align: center;
}

.tray {
  display: flex;
  gap: 9px;
  margin-left: 40px;
}

.tray svg {
  width: 16px;
  height: 16px;
  fill: none;
  stroke: #222;
  stroke-width: 1.2;
}

.tray svg:first-child {
  margin-right: 7px;
}

time {
  width: 68px;
  margin-left: -9px;
  text-align: right;
  white-space: nowrap;
}
```
FILE: script.js
```js
const tracks = [
  { name: "Stereo In", color: "#9a9a9a", icon: "wave", checked: true },
  { name: "Kick", color: "#e53935", icon: "wave", num: 1 },
  { name: "Snare", color: "#e53935", icon: "wave", num: 2 },
  { name: "Loop1", color: "#e53935", icon: "wave", num: 3 },
  { name: "Crash", color: "#e53935", icon: "wave", num: 4 },
  { name: "Bass", color: "#e57839", icon: "keys", num: 5, checked: true },
  { name: "D50 Piano", color: "#8ee53a", icon: "keys", num: 6 },
  { name: "JD800 Pad", color: "#8ee53a", icon: "keys", num: 7 },
  { name: "Jup 4 Chase", color: "#8ee53a", icon: "keys", num: 8 },
  { name: "gtr1", color: "#d4e84d", icon: "wave", num: 9 },
  { name: "gtr2", color: "#d4e84d", icon: "wave", num: 10 },
  { name: "gtr3", color: "#d4e84d", icon: "wave", num: 11 },
  { name: "Group Tracks", color: "#9a9a9a", checked: true, fold: "closed" },
  { name: "FX Channels", color: "#9a9a9a", checked: true, fold: "closed", selected: true },
  { name: "Input/Output Channels", color: "#9a9a9a", checked: true, fold: "open" },
  { name: "Stereo Out", color: "#8a8a8a", icon: "wave", checked: true, fold: "none" }
];

const channels = [
  { name: "Stereo In", num: 1, muted: true, tint: "#24282b", key: "#4a5a6c", cap: "#d93434", color: "#929292", plate: "#3b3c40", numBg: "#1e2832", top: "#1e2832", db: "-oo", dark: "#0f1114" },
  { name: "All drums", num: 13, tint: "#742f31", key: "#785261", cap: "#3f9cc8", color: "#e53935", plate: "#4d2a2d", numBg: "#1e2832", top: "#cfd8e4", db: "-oo", gap: true, dark: "#2a1517" },
  { name: "Bass", num: 5, tint: "#7a4a2f", key: "#7a6862", cap: "#cfcb8c", color: "#e57839", plate: "#4b362d", numBg: "#000", top: "#000", db: "-oo", read: true, dark: "#2a1a12" },
  { name: "all gtrs", num: 14, tint: "#b7bbbf", key: "#a3b0c0", cap: "#3f9cc8", color: "#d4e84d", plate: "#e8e8e8", numBg: "#000", top: "#cfd8e4", db: "-oo", edit: true, label: "#111", ink: "#9a9ea6", line: "#888c94", dark: "#444" },
  { name: "all keyz", num: 15, tint: "#51792f", key: "#5f8565", cap: "#3f9cc8", color: "#8ee53a", plate: "#384a2a", numBg: "#000", top: "#cfd8e4", db: "-8.6", big: [95, 96], small: [36, 36], dark: "#1c2a12" },
  { name: "FX 01-TR5 Sunset<br>Sound Studio Reve", num: 16, tint: "#4f5f64", key: "#576d80", cap: "#8648c8", color: "#8aa6a8", plate: "#394147", numBg: "#000", top: "#cfd8e4", db: "-oo", tiny: true, dark: "#1c2224" },
  { name: "FX 02-Flanger", num: 17, tint: "#4f5f64", key: "#576d80", cap: "#8648c8", color: "#8aa6a8", plate: "#394147", numBg: "#000", top: "#000", db: "-oo", dark: "#1c2224" },
  { name: "mixbus", num: 12, tint: "#5f5161", key: "#6c6886", cap: "#3f9cc8", color: "#b08ab0", plate: "#3f3841", numBg: "#1e2832", top: "#cfd8e4", db: "-8.5", big: [98, 101], small: [37, 38], dark: "#272129", rack: "#32292f", right: true, output: "Stereo Out", latency: "2.2 ms", inserts: ["Equalizers", "UADx SSL ...or", "", ""] },
  { name: "Stereo Out", num: 1, muted: true, tint: "#545659", key: "#5f6f80", cap: "#d93434", color: "#929292", plate: "#3a3b3f", numBg: "#1e2832", top: "#cfd8e4", db: "-9.3", big: [98, 103], small: [37, 39], dark: "#232426", rack: "#292a2b", right: true, latency: "66.0 ms", inserts: ["KClip3", "Pro-L 2", "*ADPTR Me...AB", ""] }
];

const byId = id => document.getElementById(id);
const icon = name => `<svg><use href="#i-${name}"/></svg>`;

byId("trackList").innerHTML = tracks.map((t, i) => `
  <li class="${t.fold ? "folder" : ""} ${t.selected ? "selected" : ""}" style="--color:${t.color}">
    <input type="checkbox" id="track${i}" ${t.checked ? "checked" : ""}>
    <i class="${t.fold && t.fold !== "none" ? "fold " + t.fold : ""}"></i>
    <label for="track${i}"><span>${t.name}</span></label>
    <i class="bar"></i>
    ${t.icon ? icon(t.icon) : "<i></i>"}
    <b>${t.num || ""}</b>
  </li>`).join("");

// level meter: marks are [label, y], levels are the top of the left and right bar
function meter(w, h, marks, levels, clipY, tickLen) {
  let out = `<svg class="scale" width="${w}" height="${h}">
    <defs><linearGradient id="hot" x2="0" y2="1"><stop stop-color="#2272e0"/><stop offset="1" stop-color="#1c40f4"/></linearGradient></defs>`;
  for (const [label, y] of marks) {
    out += `<path class="tick" d="M0 ${y}.5h${tickLen}M${w - tickLen} ${y}.5h${tickLen}"/>`;
    out += `<text x="${w / 2}" y="${y + 2}">${label}</text>`;
  }
  if (levels) {
    const bar = (w - 2) / 2;
    levels.forEach((y, i) => {
      const x = i * (bar + 1);
      out += `<rect x="${x}" y="${y}" width="${bar}" height="${clipY - y}" fill="url(#hot)"/>`;
      out += `<rect x="${x}" y="${clipY}" width="${bar}" height="${h - clipY}" fill="#1ad5ff"/>`;
    });
    for (const [, y] of marks) {
      if (y >= clipY) out += `<path d="M0 ${y}.5h${w}" stroke="#1495bb"/>`;
    }
  }
  return out + "</svg>";
}

const bridgeMarks = [[0, 22], [6, 66], [12, 109], [18, 153], [24, 196], [30, 234], [40, 285], [50, 318], [60, 332]];
const stripMarks = [[0, 9], [6, 25], [12, 41], [18, 57], [24, 73], [30, 87], [40, 106], [60, 123]];
const dialogMarks = [[0, 15], [6, 44], [12, 73], [18, 102], [24, 130], [30, 156], [40, 189], [50, 211]];
const stripTicks = [["6", 8], ["0", 32], ["5", 55], ["10", 71], ["15", 85], ["", 95], ["", 108], ["", 116], ["", 120], ["00", 125]];
const dialogTicks = [["6", 16], ["0", 58], ["5", 96], ["10", 125], ["15", 148], ["20", 165], ["30", 187], ["40", 200], ["", 207], ["00", 216]];

// lays one element per channel out in console order, with a filler before the outputs
function row(render, filler) {
  const left = channels.filter(c => !c.right).map(render).join("");
  const right = channels.filter(c => c.right).map(render).join("");
  return left + filler + right;
}

const cell = (c, cls) => `class="cell ${cls} ${c.gap ? "gap-after" : ""}"`;

byId("bridge").innerHTML = row(c => `
  <div ${cell(c, "")}><div class="well">${meter(86, 341, bridgeMarks, c.big, 109, 36)}</div></div>`,
  `<div class="filler"></div>`);

function rack(c) {
  const slots = (c.inserts || ["", "", "", ""]).map(s => {
    const off = s.startsWith("*");
    return `<div class="slot ${off ? "bypassed" : s ? "used" : ""}">${s.replace("*", "")}</div>`;
  }).join("");
  const style = c.right ? `--gap:${c.tint};--rack:${c.rack};` : "";
  return `<div ${cell(c, "rack")} style="${style}">
    <h3><span>ROUTING</span></h3>
    <div class="routing">${c.output ? `<div class="slot">${c.output}</div>` : ""}</div>
    <h3 style="${c.right ? "--led:#6aa5e8" : ""}"><i></i><span>INSERTS</span></h3>
    <div class="slots">${slots}</div>
    <h3><i></i><span>EQ</span></h3>
  </div>`;
}

byId("racks").innerHTML = row(rack, `
  <div class="rack filler"><h3></h3><div class="routing"></div><h3></h3><div class="slots"></div><h3></h3></div>`);

byId("latency").innerHTML = row(c => `
  <div ${cell(c, "")} style="--dark:${c.dark};${c.right ? `--gap:${c.tint}` : ""}"><span>${c.latency || ""}</span></div>`,
  `<div class="filler"></div>`);

function ruler(w, h, ticks) {
  return `<svg class="ruler" width="${w}" height="${h}">` + ticks.map(([label, y]) =>
    `<path d="M0 ${y}.5h${w - 11}"/><text x="${w}" y="${y + 2}">${label}</text>`).join("") + "</svg>";
}

function strip(c, large) {
  const size = large ? [31, 233, dialogTicks] : [32, 133, stripTicks];
  const leds = large ? meter(40, 229, dialogMarks, null, 0, 11) : meter(35, 129, stripMarks, c.small, 41, 8);
  return `
    <div class="strip-body">
      <div class="pan"><i></i>C</div>
      <div class="keys"><button>M</button><button>S</button><button>L</button><button class="${c.edit ? "cyan" : ""}" aria-label="Edit channel">${icon("edit")}</button></div>
      <div class="faders">
        <input type="range" aria-label="Volume" value="${large ? 83 : 84}">
        ${ruler(...size)}
        <div class="led">${leds}</div>
      </div>
      <div class="values">0.00<span>${c.db}</span></div>
      <div class="keys"><button class="${c.read ? "green" : ""}">R</button><button>W</button><button aria-label="Monitor">${c.read ? "◀" : ""}</button><button aria-label="Record enable">${c.read ? "●" : ""}</button></div>
    </div>
    <div class="plate">
      <div class="plate-top">${icon("rings")}<span class="${c.muted ? "muted" : ""}">${c.num}</span></div>
      <p class="${c.tiny ? "small" : ""}"><span>${c.name}</span></p>
    </div>`;
}

const vars = c => `--tint:${c.tint};--key:${c.key};--cap:${c.cap};--color:${c.color};--name:${c.plate};--num:${c.numBg};--top:${c.top};--dark:${c.dark};` +
  (c.label ? `--label:${c.label};` : "") + (c.ink ? `--ink:${c.ink};--line:${c.line};` : "");

byId("strips").innerHTML = row(c => `<div ${cell(c, "strip")} style="${vars(c)}">${strip(c, false)}</div>`,
  `<div class="filler"></div>`);

const selected = { ...channels[3], tint: "transparent", key: "#46566a", ink: "#b9bdc2", line: "#8a8e92", dark: "#0f1114" };
byId("dialogStrip").innerHTML = `<div style="${vars(selected)}">${strip(selected, true)}</div>`;

byId("insertSlots").innerHTML = Array.from({ length: 16 }, (_, i) => `<div class="bay ${i === 13 ? "post" : ""}"></div>`).join("");
byId("sendSlots").innerHTML = `<div class="bay"></div>`.repeat(8);

// EQ curve
const freqs = [["20", 0], ["50", 71], ["100", 124], ["200", 178], ["500", 248], ["1 k", 302], ["2 k", 355], ["5 k", 426], ["10 k", 480], ["20 k", 534]];
const gains = [["+24", 0], ["+18", 31], ["+12", 61], ["+6", 92], ["0", 122], ["-6", 153], ["-12", 183], ["-18", 214], ["-24", 244]];
byId("curve").innerHTML = `<svg width="574" height="265" viewBox="-20 -4 574 265">
  <defs>
    <linearGradient id="gray"><stop stop-color="#000"/><stop offset="0.3" stop-color="#08080a"/><stop offset="1" stop-color="#2b2d31"/></linearGradient>
    <linearGradient id="blue"><stop stop-color="#0a1922"/><stop offset="1" stop-color="#2e4252"/></linearGradient>
    <clipPath id="plot"><path d="M0 0h534v244H0z"/></clipPath>
    <clipPath id="under"><path d="M0 122h534v108C522 212 510 203 490 203 465 203 448 218 404 244H0z"/></clipPath>
  </defs>
  <g fill="url(#gray)"><rect width="124" height="244"/><rect x="124" width="178" height="244"/><rect x="302" width="178" height="244"/><path fill="#0b0b0d" d="M480 0h54v244h-54z"/></g>
  <g fill="url(#blue)" clip-path="url(#under)"><rect width="124" height="244"/><rect x="124" width="178" height="244"/><rect x="302" width="178" height="244"/><path fill="#12242f" d="M480 0h54v244h-54z"/></g>
  <g stroke="#82a8b8" opacity="0.6">${freqs.map(f => `<path d="M${f[1]}.5 0v244"/>`).join("")}</g>
  <g stroke="#9aa8b4">${gains.map((g, i) => `<path opacity="${i % 2 ? 0.25 : 0.6}" d="M0 ${g[1]}.5h534"/>`).join("")}</g>
  <g clip-path="url(#plot)" fill="none">
    <path d="M404 244C448 218 465 203 490 203c20 0 32 9 44 27" stroke="#3fa3e6" stroke-width="2"/>
    <g stroke="#d4d4d4" stroke-width="1.500"><circle cx="511" cy="244" r="7"/><circle cx="523" cy="244" r="7"/><path d="M511 238v6M523 238v6"/></g>
  </g>
  <circle cx="215.500" cy="137.500" r="7" fill="#2c3238" stroke="#d8d8d8" stroke-width="1.500"/><text x="215" y="141" text-anchor="middle">2</text>
  ${gains.map(g => `<text x="-2" y="${g[1] + 4}" text-anchor="end">${g[0]}</text>`).join("")}
  ${freqs.map(f => `<text x="${f[1]}" y="258" text-anchor="middle">${f[0]}</text>`).join("")}
</svg>`;

const bands = [
  { name: "1 LO", shape: "low", values: [["-24.0dB", 0, 51], ["17404Hz", 93, 97, "focus"], ["0.0", 0, 100]] },
  { name: "2 LMF", shape: "bell", values: [["-3.0dB", 43, 52], ["324.5Hz", 35, 40], ["1.0", 3, 95]] },
  { name: "3 HMF", shape: "bell", off: true, values: [["-0.6dB", 0, 0], ["2718Hz", 0, 0], ["1.0", 0, 0]] },
  { name: "4 HI", shape: "high", values: [["-24.0dB", 0, 51], ["14853Hz", 89, 93], ["0.0", 0, 100]] }
];
const labels = ["gain", "frequency", "Q"];

byId("bands").innerHTML = `
  <div class="band pre">
    <header><svg viewBox="0 0 14 14"><path d="M1 2h12M4 6h6v5H4z" fill="none" stroke="currentColor" stroke-width="1.500"/></svg><span>PRE</span><svg viewBox="0 0 10 12"><use href="#i-diamond"/></svg></header>
    <div class="filter">${icon("power")}HC<b>12</b></div>
    <div class="filter">${icon("power")}LC<b>12</b></div>
    <div class="gain">Gain</div>
    <button class="phase">Phase 0°</button>
  </div>` + bands.map(b => `
  <div class="band ${b.off ? "off" : ""}">
    <header>${icon(b.off ? "power" : "power-on")}<span>${b.name}</span><svg class="shape"><use href="#i-${b.shape}"/></svg></header>
    ${b.values.map(([text, from, to, cls], i) =>
      `<input class="${cls || ""}" aria-label="${b.name} ${labels[i]}" value="${text}" style="--from:${from}%;--to:${to}%">`).join("")}
  </div>`).join("");

// loudness meter
let lm = `<svg width="178" height="479" viewBox="1729 146 178 479">
  <path d="M1792.500 146.500h50v478h-50z" fill="#0e0e0e" stroke="#7c7e80" stroke-width="2"/>
  <path d="M1794 149h13v474h-13zM1809 149h18v474h-18zM1829 149h12v474h-12z" fill="#000"/>
  <rect x="1809" y="226" width="18" height="87" fill="#c4241c"/>
  <rect x="1809" y="313" width="18" height="309" fill="#2468b8"/>
  <path d="M1795 170l10-5v10z" fill="#d00000"/><path d="M1841 252l-10-5v10z" fill="#77797b"/>`;
for (let i = 0; i < 10; i++) {
  const y = 165 + i * 49;
  lm += `<path d="M1778 ${y}.5h10M1847 ${y}.5h11" stroke="#f2f2f2"/>`;
  lm += `<path d="M1809 ${y}.5h18" stroke="#00000055"/>`;
  lm += `<text x="1776" y="${y + 4}" text-anchor="end">${14 + i * 3}</text><text x="1860" y="${y + 4}">${14 + i * 3}</text>`;
}
byId("loudnessMeter").innerHTML = lm + "</svg>";

const stats = [
  ["Momentary Max.", "-11.6", "LUFS"],
  ["Short-Term", "-19.3", "LUFS", "-12.5"],
  ["Integrated", "-14.3", "LUFS"],
  ["Range", "+5.2", "LU"],
  ["True Peak", "-1.15", "dB"],
  ["Time", "00:07:09", ""]
];
byId("stats").innerHTML = stats.map(([title, value, unit, low]) => `
  <div><dt>${title}</dt><small>${low || ""}</small><dd class="${title === "Integrated" ? "over" : ""}">${value}</dd><small>${unit}</small></div>`).join("");
```
